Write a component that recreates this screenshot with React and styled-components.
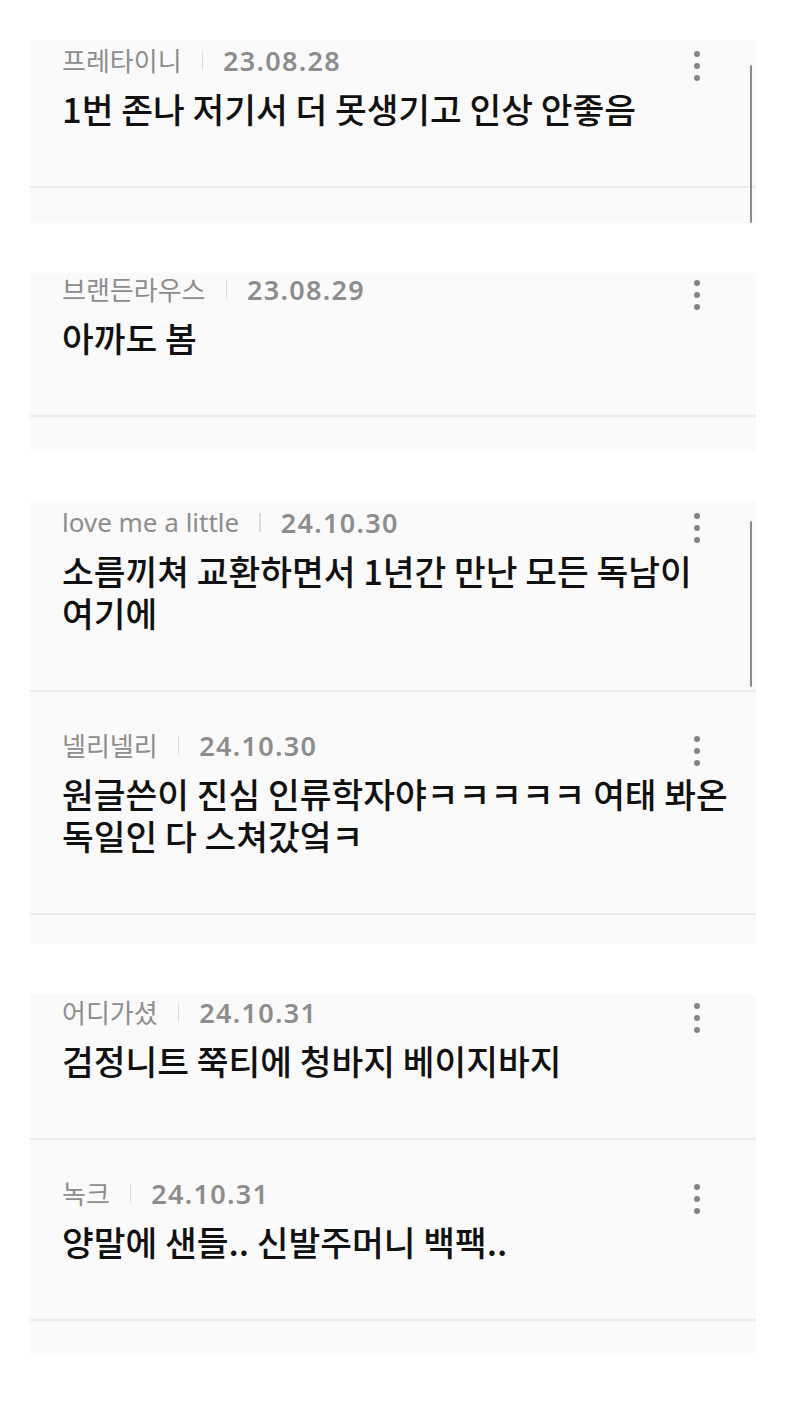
import React from "react";
import styled, { createGlobalStyle } from "styled-components";

const GlobalStyle = createGlobalStyle`
  html, body {
    margin: 0;
    padding: 0;
    background: #ffffff;
  }
  body {
    font-family: "Noto Sans CJK KR", "Noto Sans", sans-serif;
  }
`;

const panels = [
  {
    offset: 5,
    tail: 35,
    scroll: { top: 25, bottom: 0 },
    comments: [
      { name: "프레타이니", date: "23.08.28", text: ["1번 존나 저기서 더 못생기고 인상 안좋음"] },
    ],
  },
  {
    offset: 1,
    tail: 34,
    comments: [{ name: "브랜든라우스", date: "23.08.29", text: ["아까도 봄"] }],
  },
  {
    offset: 6,
    tail: 29,
    scroll: { top: 20, bottom: 257 },
    comments: [
      {
        name: "love me a little",
        date: "24.10.30",
        text: ["소름끼쳐 교환하면서 1년간 만난 모든 독남이", "여기에"],
      },
      {
        name: "넬리넬리",
        date: "24.10.30",
        text: ["원글쓴이 진심 인류학자야ㅋㅋㅋㅋㅋ 여태 봐온", "독일인 다 스쳐갔엌ㅋ"],
      },
    ],
  },
  {
    offset: 3,
    tail: 32,
    comments: [
      { name: "어디가셨", date: "24.10.31", text: ["검정니트 쭉티에 청바지 베이지바지"] },
      { name: "녹크", date: "24.10.31", text: ["양말에 샌들.. 신발주머니 백팩.."] },
    ],
  },
];

const Page = styled.div`
  display: flex;
  flex-direction: column;
  gap: 50px;
  padding: 40px 30px;
`;

const Panel = styled.section`
  position: relative;
  background: #fafafa;
  padding-bottom: ${(p) => p.$tail}px;
`;

const ScrollBar = styled.div`
  position: absolute;
  right: 4px;
  width: 2px;
  background: #8c8c8c;
  border-radius: 1px;
`;

const Item = styled.article`
  position: relative;
  padding: ${(p) => p.$top}px 16px 57px 32px;
  border-bottom: 2px solid #ebebeb;
`;

const Meta = styled.div`
  display: flex;
  align-items: center;
  height: 30px;
  color: #8d8d8d;
`;

const Name = styled.span`
  font-family: "Noto Sans", "Noto Sans CJK KR", sans-serif;
  font-size: 26px;
  font-weight: 400;
`;

const Sep = styled.span`
  width: 1.5px;
  height: 19px;
  background: #dcdcdc;
  margin: 0 20px;
`;

const Date = styled.span`
  font-family: "Noto Sans", "Noto Sans CJK KR", sans-serif;
  font-size: 27px;
  font-weight: 600;
  letter-spacing: 1.3px;
`;

const Text = styled.p`
  margin: 12px 0 0;
  font-size: 34.5px;
  line-height: 42px;
  font-weight: 500;
  color: #111111;
  white-space: nowrap;
`;

const MoreButton = styled.button`
  position: absolute;
  right: 52px;
  top: ${(p) => p.$top}px;
  display: flex;
  flex-direction: column;
  align-items: center;
  gap: 6px;
  padding: 6px 4px;
  border: 0;
  background: none;
`;

const Dot = styled.span`
  width: 6px;
  height: 6px;
  border-radius: 50%;
  background: #858585;
`;

const Comment = ({ c, top }) => (
  <Item $top={top}>
    <Meta>
      <Name>{c.name}</Name>
      <Sep />
      <Date>{c.date}</Date>
    </Meta>
    <Text>
      {c.text.map((line, i) => (
        <React.Fragment key={i}>
          {i > 0 && <br />}
          {line}
        </React.Fragment>
      ))}
    </Text>
    <MoreButton $top={top}>
      <Dot />
      <Dot />
      <Dot />
    </MoreButton>
  </Item>
);

const App = () => (
  <>
    <GlobalStyle />
    <Page>
      {panels.map((p, pi) => (
        <Panel key={pi} $tail={p.tail}>
          {p.comments.map((c, ci) => (
            <Comment key={ci} c={c} top={ci === 0 ? p.offset : 38} />
          ))}
          {p.scroll && (
            <ScrollBar style={{ top: p.scroll.top, bottom: p.scroll.bottom }} />
          )}
        </Panel>
      ))}
    </Page>
  </>
);

export default App;
